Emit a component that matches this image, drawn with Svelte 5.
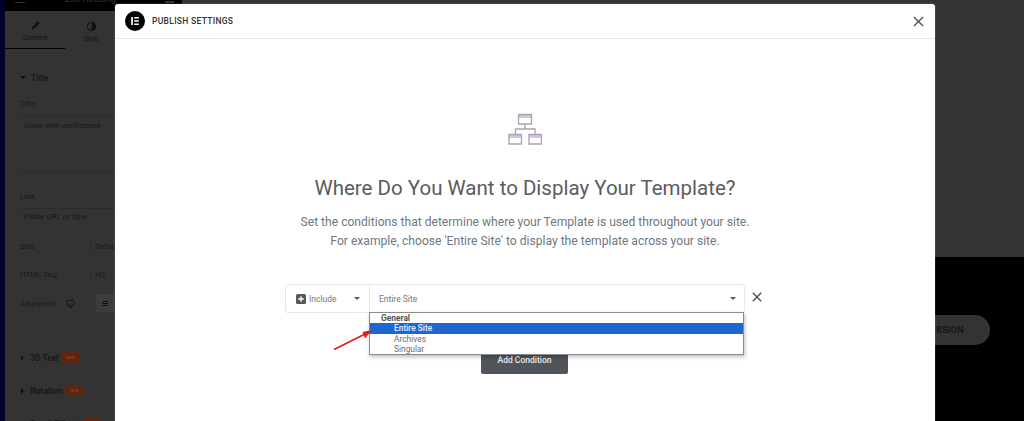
<script>
  const fields = [
    { label: 'Size', value: 'Default' },
    { label: 'HTML Tag', value: 'H3' }
  ];
  const pro = [
    { name: '3D Text' },
    { name: 'Notation' },
    { name: 'Scroll Effects' }
  ];
</script>

<div class="page">
  <div class="strip"></div>
  <aside class="side">
    <div class="topbar">
      <span class="burger"></span>
      <span class="ttl">Edit Heading</span>
      <span class="dots"></span>
    </div>
    <div class="tabs">
      <div class="tab on">
        <svg viewBox="0 0 12 12" width="11" height="11"><path d="M1.5 10.5 L2.5 7.5 L8.5 1.5 L10.5 3.5 L4.5 9.5 Z" fill="#111"/></svg>
        <span>Content</span>
      </div>
      <div class="tab two">
        <svg viewBox="0 0 12 12" width="11" height="11"><circle cx="6" cy="6" r="4.6" fill="none" stroke="#111" stroke-width="1.2"/><path d="M6 1.4a4.6 4.6 0 0 1 0 9.2z" fill="#111"/></svg>
        <span>Style</span>
      </div>
    </div>
    <div class="panel">
      <div class="section"><i class="tri down"></i>Title</div>
      <div class="lab">Title</div>
      <div class="area">Grow with confidence</div>
      <div class="lab">Link</div>
      <div class="url">Paste URL or type</div>
      {#each fields as f}
        <div class="pair"><span class="plabel">{f.label}</span><span class="pval">{f.value}</span></div>
      {/each}
      <div class="pair align">
        <span class="plabel">Alignment</span>
        <svg viewBox="0 0 10 10" width="9" height="9"><rect x="1" y="1.5" width="8" height="5.5" rx="1" fill="none" stroke="#111"/><path d="M3 9h4" stroke="#111"/></svg>
        <span class="albtn"><b></b><b></b><b></b></span>
      </div>
      <div class="pros">
        {#each pro as p}
          <div class="section pro"><i class="tri right"></i>{p.name}<em>NEW</em></div>
        {/each}
      </div>
    </div>
  </aside>
  <main class="back">
    <div class="upper"></div>
    <div class="lower">
      <div class="pill">UPGRADE VERSION</div>
    </div>
  </main>

  <section class="modal">
    <header class="head">
      <span class="logo">
        <svg viewBox="0 0 20 20" width="20" height="20"><circle cx="10" cy="10" r="10" fill="#000"/><path d="M6.2 6h1.7v8H6.2zM9.2 6h4.6v1.6H9.2zM9.2 9.2h4.6v1.6H9.2zM9.2 12.4h4.6V14H9.2z" fill="#fff"/></svg>
      </span>
      <h2>PUBLISH SETTINGS</h2>
      <svg class="close" viewBox="0 0 12 12" width="11" height="11"><path d="M1 1l10 10M11 1L1 11" stroke="#555" stroke-width="1.6"/></svg>
    </header>
    <div class="body">
      <svg class="hero" viewBox="0 0 34 34" width="34" height="34">
        <path d="M10.500 1.500h13v3.500h-13zM1 21.500h12.500v3.500H1zM21 21.500h12.500v3.500H21z" fill="#dcbdec"/>
        <path d="M10.500 1.500h13v9.500h-13zM1 21.500h12.500v9.500H1zM21 21.500h12.500v9.500H21zM17 11v5M7.500 21.500V16h19.500v5.500" fill="none" stroke="#a9a5ab" stroke-width="1.300"/>
      </svg>
      <h1>Where Do You Want to Display Your Template?</h1>
      <p>Set the conditions that determine where your Template is used throughout your site.<br>For example, choose 'Entire Site' to display the template across your site.</p>
      <div class="row-wrap">
        <div class="row">
          <div class="inc">
            <svg viewBox="0 0 10 10" width="10" height="10"><rect width="10" height="10" rx="1.500" fill="#555a60"/><path d="M5 2.200v5.600M2.200 5h5.600" stroke="#fff" stroke-width="1.400"/></svg>
            <span>Include</span>
            <i class="caret"></i>
          </div>
          <div class="site">
            <span>Entire Site</span>
            <i class="caret"></i>
          </div>
          <div class="menu">
            <div class="group">General</div>
            <div class="opt sel">Entire Site</div>
            <div class="opt">Archives</div>
            <div class="opt">Singular</div>
          </div>
        </div>
        <svg class="rowx" viewBox="0 0 12 12" width="10" height="10"><path d="M1 1l10 10M11 1L1 11" stroke="#4c4c4c" stroke-width="1.600"/></svg>
      </div>
      <button class="add">Add Condition</button>
    </div>
  </section>

  <svg class="arrow" viewBox="0 0 40 24" width="40" height="24">
    <path d="M1 22.500 L31 7.500" stroke="#d9201f" stroke-width="1.600" fill="none"/>
    <path d="M39 3 L29.500 5 L32 11.500 Z" fill="#d9201f"/>
  </svg>
</div>

<style>
  :global(body) { margin: 0; }
  .page {
    position: relative;
    width: 1024px;
    height: 421px;
    overflow: hidden;
    display: flex;
    background: #333;
    font-family: Roboto, "Liberation Sans", sans-serif;
  }
  .strip { width: 5px; flex: none; background: #00002a; }
  .side { width: 177px; flex: none; display: flex; flex-direction: column; color: #111; overflow: hidden; }
  .topbar { height: 11px; background: #000; flex: none; display: flex; align-items: flex-start; overflow: hidden; }
  .burger { width: 10px; height: 1px; background: #333; margin: 2px 0 0 10px; }
  .ttl { font-size: 9px; line-height: 9px; color: #333; margin: -5px 0 0 40px; width: 100px; }
  .dots { width: 9px; height: 2px; background: #333; margin: 1px 0 0 0; }
  .tabs { display: flex; height: 38px; flex: none; }
  .tab {
    width: 60px; display: flex; flex-direction: column; align-items: center; justify-content: center; gap: 3px;
    font-size: 7px; color: #151515; padding-top: 3px; box-sizing: border-box;
  }
  .tab.two { width: 52px; }
  .tab.on { border-bottom: 1.500px solid #000; }
  .panel { padding: 23px 0 0 15px; font-size: 8px; color: #191919; }
  .section { display: flex; align-items: center; font-weight: 700; font-size: 8.500px; height: 11px; margin-bottom: 16px; }
  .tri { width: 0; height: 0; margin-right: 5px; }
  .tri.down { border-left: 3px solid transparent; border-right: 3px solid transparent; border-top: 3px solid #111; }
  .tri.right { border-top: 3px solid transparent; border-bottom: 3px solid transparent; border-left: 3px solid #111; margin-left: 1px; margin-right: 6px; }
  .lab { margin-bottom: 7px; height: 10px; }
  .area { border: 1px solid #2b2b2b; border-width: 1px 0; height: 57px; width: 100px; padding: 4px 4px; box-sizing: border-box; margin-bottom: 19px; }
  .lab + .url { margin-top: -1px; }
  .url { border-top: 1px solid #2b2b2b; width: 100px; padding: 2px 4px 0; margin-bottom: 17px; height: 12px; line-height: 12px; }
  .pair { display: flex; align-items: center; height: 12px; margin-bottom: 16px; }
  .plabel { width: 71px; flex: none; }
  .pval { border-left: 1px solid #2b2b2b; padding-left: 3px; }
  .align { margin-bottom: 40px; height: 18px; margin-top: -2px; }
  .align .plabel { width: 46px; }
  .albtn { margin-left: 21px; width: 18px; height: 18px; background: #3c3c3c; display: flex; flex-direction: column; gap: 1px; align-items: center; justify-content: center; }
  .albtn b { display: block; width: 6px; height: 1px; background: #111; }
  .pro { margin-bottom: 22px; }
  .pro em { font-style: normal; background: #5e2410; color: #8f4a2a; font-size: 4px; padding: 3px 4px; margin-left: 3px; border-radius: 1px; font-weight: 400; }
  .back { flex: 1; display: flex; flex-direction: column; }
  .upper { height: 257px; flex: none; }
  .lower { flex: 1; background: #000; display: flex; justify-content: flex-end; padding: 58px 34px 0 0; }
  .pill {
    width: 190px; height: 30px; border-radius: 15px; background: #333; color: #111; font-size: 9px; font-weight: 500;
    letter-spacing: .3px; display: flex; align-items: center; justify-content: flex-end; padding-right: 26px; box-sizing: border-box;
  }
  .modal {
    position: absolute; left: 115px; top: 4px; width: 820px; height: 430px;
    background: #fff; border-radius: 3px 3px 0 0;
    box-shadow: 0 0 2px rgba(255,255,255,.3);
    display: flex; flex-direction: column;
  }
  .head { height: 34px; flex: none; display: flex; align-items: center; padding: 0 11px 0 10px; border-bottom: 1px solid #e8e8e8; }
  .logo { width: 20px; height: 20px; display: block; flex: none; margin-right: 7px; }
  .logo svg { display: block; }
  .head h2 { margin: 0; font-size: 8.500px; font-weight: 500; color: #333; letter-spacing: .3px; flex: 1; }
  .body { display: flex; flex-direction: column; align-items: center; padding-top: 74px; }
  .hero { display: block; margin-bottom: 28px; }
  h1 { margin: 0; font-size: 20.500px; line-height: 26px; font-weight: 400; color: #595c5f; }
  p { margin: 12px 0 0; font-size: 12.100px; line-height: 19px; font-weight: 400; color: #6d7882; text-align: center; }
  .row-wrap { margin-top: 33px; display: flex; align-items: center; width: 484px; gap: 7px; margin-left: 4px; }
  .row { position: relative; display: flex; flex: none; width: 460px; height: 29px; border: 1px solid #e8e9ea; border-radius: 3px; box-sizing: border-box; font-size: 8.500px; color: #6d7882; }
  .inc { width: 84px; flex: none; display: flex; align-items: center; padding: 0 9px 0 10px; box-sizing: border-box; gap: 3px; border-right: 1px solid #e8e9ea; }
  .inc span { flex: 1; }
  .site { flex: 1; display: flex; align-items: center; justify-content: space-between; padding: 0 8px 0 9px; }
  .caret { width: 0; height: 0; border-left: 3px solid transparent; border-right: 3px solid transparent; border-top: 3px solid #555; }
  .menu {
    position: absolute; left: 83px; top: 27px; width: 375px; height: 43px; box-sizing: border-box; background: #fff;
    border: 1px solid #8b8b8b; box-shadow: 1px 2px 4px rgba(0,0,0,.25); z-index: 2; font-size: 8.400px; line-height: 10.500px; color: #6b6b6b;
  }
  .group { padding-left: 11px; font-weight: 700; color: #555; height: 10px; }
  .opt { padding-left: 24px; height: 10.500px; }
  .opt.sel { background: #1f66d1; color: #e4f0ff; font-weight: 500; }
  .rowx { display: block; flex: none; margin: -3px 0 0 0; }
  .add {
    margin-top: 33px; margin-left: -1px; width: 87px; height: 28px; border: 0; border-radius: 2px; background: #50555b; color: #eceeef;
    font-family: inherit; font-size: 8.500px; font-weight: 500; padding: 0;
  }
  .arrow { position: absolute; left: 333px; top: 327px; z-index: 3; }
</style>
